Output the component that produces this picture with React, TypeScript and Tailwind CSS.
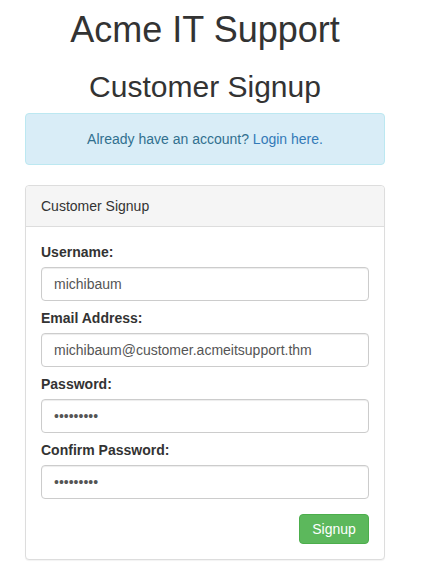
import type { ReactNode } from "react";

function Field({
  label,
  type,
  value,
  last,
}: Readonly<{ label: string; type: string; value: string; last?: boolean }>) {
  return (
    <div className={last ? "mb-[15px]" : "mb-[7px]"}>
      <label className="mb-[5px] block text-[14px] font-bold leading-5 text-[#333]">{label}</label>
      <input
        type={type}
        defaultValue={value}
        readOnly
        className="block h-[34px] w-full rounded border border-[#ccc] bg-white px-3 py-1.5 text-[14px] leading-5 text-[#555] shadow-[inset_0_1px_1px_rgba(0,0,0,0.075)] outline-none"
      />
    </div>
  );
}

function Panel({ title, children }: Readonly<{ title: string; children: ReactNode }>) {
  return (
    <div className="rounded border border-[#ddd] bg-white shadow-[0_1px_1px_rgba(0,0,0,0.05)]">
      <div className="rounded-t border-b border-[#ddd] bg-[#f5f5f5] px-[15px] py-2.5 text-[14px] leading-5 text-[#333]">
        {title}
      </div>
      <div className="p-[15px]">{children}</div>
    </div>
  );
}

export default function App() {
  return (
    <div className="min-h-[580px] bg-white font-['Liberation_Sans',Arial,sans-serif] text-[14px] text-[#333]">
      <div className="w-[410px] px-[25px]">
        {/* Page titles */}
        <h1 className="mt-[10px] mb-5 text-center text-[36px] font-medium leading-[1.1] text-[#333]">
          Acme IT Support
        </h1>
        <h2 className="mb-[10px] text-center text-[30px] font-medium leading-[1.1] text-[#333]">
          Customer Signup
        </h2>

        {/* Info alert */}
        <div className="mb-5 rounded border border-[#bce8f1] bg-[#d9edf7] p-[15px] text-center leading-5 text-[#31708f]">
          Already have an account? <a className="text-[#337ab7]">Login here.</a>
        </div>

        {/* Signup form */}
        <Panel title="Customer Signup">
          <Field label="Username:" type="text" value="michibaum" />
          <Field label="Email Address:" type="text" value="michibaum@customer.acmeitsupport.thm" />
          <Field label="Password:" type="password" value="123456789" />
          <Field label="Confirm Password:" type="password" value="123456789" last />
          <div className="flex justify-end">
            <button className="h-[30px] w-[70px] rounded border border-[#4cae4c] bg-[#5cb85c] text-[14px] leading-5 text-white">
              Signup
            </button>
          </div>
        </Panel>
      </div>
    </div>
  );
}
